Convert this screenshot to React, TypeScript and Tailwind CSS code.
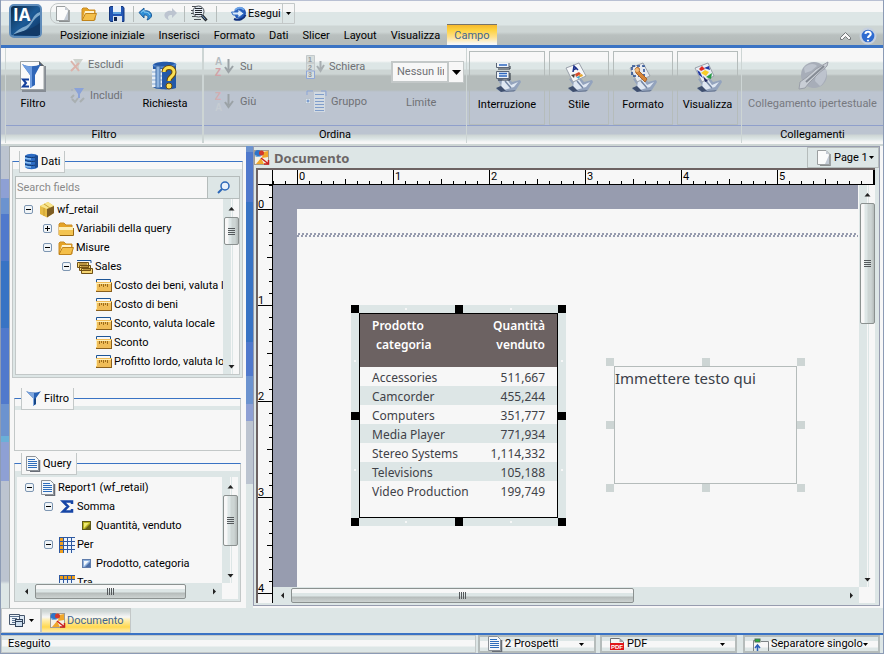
import type { ReactNode } from "react";
import clsx from "clsx";

/* ---------- Icons ---------- */

function LogoIcon() {
  return (
    <svg width="34" height="35" viewBox="0 0 34 35" aria-hidden="true">
      <defs>
        <linearGradient id="logo" x1="0" y1="0" x2="1" y2="1">
          <stop offset="0" stopColor="#0a2540" />
          <stop offset="0.5" stopColor="#1c5a96" />
          <stop offset="1" stopColor="#0b2f5c" />
        </linearGradient>
      </defs>
      <rect x="1" y="1" width="31" height="32" rx="4" fill="url(#logo)" stroke="#5f8cba" strokeWidth="2" />
      <path d="M31 8C22 11 25 18 17 22C12 24 8 26 3 32L15 27C22 24 23 15 31 11Z" fill="#a9cfe8" opacity="0.7" />
      <path d="M3 31C12 27 20 27 31 19V31Z" fill="#123a68" />
      <text x="4" y="17" fontFamily="Open Sans" fontWeight="700" fontSize="17" fill="#fff">IA</text>
    </svg>
  );
}

function NewIcon() {
  return (
    <svg width="16" height="16" viewBox="0 0 16 16" aria-hidden="true">
      <path d="M14 4V15.500H4" fill="none" stroke="#8b8f90" strokeWidth="1.500" />
      <path d="M1.500 0.500H10L13.500 4V14.500H1.500Z" fill="#fbfbfb" stroke="#9b9fa0" />
      <path d="M10 0.500V4H13.500L9 14H13V5Z" fill="#c3cad4" />
    </svg>
  );
}

function FolderIcon({ open = false }: { open?: boolean }) {
  return (
    <svg width="16" height="16" viewBox="0 0 16 16" aria-hidden="true">
      <path d="M1 14V3L2 2H6L8 4H14V14Z" fill="#e5a326" stroke="#c98d28" />
      {open ? (
        <>
          <path d="M2 12L4 5H13V8Z" fill="#fff3cf" />
          <path d="M1 14.500L4.500 7.500H15.500L13 14.500Z" fill="#f4bf49" stroke="#c0841c" />
        </>
      ) : (
        <>
          <path d="M1 6H15V14H1Z" fill="#f3c452" />
          <path d="M1 6H15V9H1Z" fill="#fdeeb4" />
          <path d="M2 14.500H15.500V7" fill="none" stroke="#9b6a13" />
        </>
      )}
    </svg>
  );
}

function SaveIcon() {
  return (
    <svg width="16" height="16" viewBox="0 0 16 16" aria-hidden="true">
      <path d="M0.500 1L2 0.500H14L15 2V15.500H1.500L0.500 14Z" fill="#2357b5" stroke="#14367c" />
      <rect x="4" y="0" width="8" height="8" fill="#eaf2fa" />
      <rect x="4" y="6" width="8" height="2" fill="#5ea2de" />
      <rect x="4" y="10" width="9" height="6" fill="#dce5ee" />
      <rect x="5" y="11" width="3" height="4" fill="#11254e" />
    </svg>
  );
}

function UndoIcon() {
  return (
    <svg width="15" height="14" viewBox="0 0 15 14" aria-hidden="true">
      <path d="M1 5.500L6 1V4C11 3 14 6 13.500 9C13 11 11 12.500 9 13C11 10 10 8 6 8V11Z" fill="#2f8fd6" stroke="#1d5c9b" />
      <path d="M3 5.500L6 3V5C9 5 11 5.500 12 8" fill="none" stroke="#8fd0f5" />
    </svg>
  );
}

function RedoIcon() {
  return (
    <svg width="15" height="14" viewBox="0 0 15 14" aria-hidden="true">
      <path d="M14 6L9 1V4C4 3 1 6 1.500 9C2 11 4 12.500 6 13C4 10 5 8 9 8V11Z" fill="#bcc4d0" />
    </svg>
  );
}

function PreviewIcon() {
  return (
    <svg width="17" height="17" viewBox="0 0 17 17" aria-hidden="true">
      <path d="M1 1.500H10M0 5.500H8M0 8.500H8M1 11.500H8M3 14.500H10" stroke="#4a4e54" />
      <circle cx="7.500" cy="6.500" r="5.500" fill="#e4ebf3" stroke="#4b5158" />
      <path d="M4 3.500H11M4 5.500H11M4 7.500H11M4 9.500H11" stroke="#22262c" />
      <path d="M11 10.500L15.500 15.500" stroke="#23262a" strokeWidth="3" />
      <path d="M11 10.500L14.500 14.500" stroke="#6fa0d8" />
    </svg>
  );
}

function RunIcon() {
  return (
    <svg width="16" height="15" viewBox="0 0 16 15" aria-hidden="true">
      <circle cx="9" cy="7" r="6" fill="#2457b8" />
      <path d="M4 4C7 1 11 1 13 4" fill="none" stroke="#6ea5e8" strokeWidth="2" />
      <path d="M0.500 6H7V3L13 7.500L7 12V9H2Z" fill="#dceafa" stroke="#3670c4" />
      <path d="M3 13C8 15 13 13 14.500 9" fill="none" stroke="#0f2f7c" strokeWidth="2" />
    </svg>
  );
}

function HelpIcon() {
  return (
    <svg width="18" height="18" viewBox="0 0 16 17" aria-hidden="true">
      <circle cx="8" cy="8.500" r="7" fill="#2f6bd0" stroke="#c6d0de" strokeWidth="2" />
      <path d="M5.500 6.500C6 3.500 11 4 10.500 7C10 8.500 8 8.500 8 10.500M8 12V13.500" fill="none" stroke="#fff" strokeWidth="2" />
    </svg>
  );
}

function FilterLargeIcon() {
  return (
    <svg width="28" height="32" viewBox="0 0 28 32" aria-hidden="true">
      <path d="M26 6V31H3" fill="none" stroke="#868c94" strokeWidth="2" />
      <path d="M1.500 1.500H20L25 6V29.500H1.500Z" fill="#fafafa" stroke="#9da3a4" />
      <path d="M20 1V6H25Z" fill="#596069" />
      <path d="M3 4C8 7 16 7 22 4L16 15V25L11 28V15Z" fill="#2f66b8" />
      <path d="M3 4C8 7 12 6 13 6V27L11 28V15Z" fill="#6e9de0" />
      <path d="M10 19.500H4L7 23L4 26.500H10" fill="none" stroke="#123f9c" strokeWidth="2" />
    </svg>
  );
}

function FunnelIcon() {
  return (
    <svg width="16" height="17" viewBox="0 0 16 17" aria-hidden="true">
      <path d="M0 1C5 3 11 3 15 1L10 8V14L7 16V8Z" fill="#2861b4" />
      <path d="M1 1.500C4 3 7 3 8 3V15.500L7 16V8Z" fill="#7fa7df" />
      <path d="M10 8V14L8 15V9Z" fill="#174584" />
    </svg>
  );
}

function ExcludeIcon() {
  return (
    <svg width="14" height="14" viewBox="0 0 14 14" aria-hidden="true">
      <path d="M3 1H13L9 7V12H7V7Z" fill="#cfd3ce" />
      <path d="M1 3L9 13M9 5L1 13" stroke="#dbb3ab" strokeWidth="2" />
    </svg>
  );
}

function IncludeIcon() {
  return (
    <svg width="16" height="17" viewBox="0 0 16 17" aria-hidden="true">
      <path d="M4 1H14L10 7V11H8V7Z" fill="#8aa2d8" />
      <path d="M1 11L4 8M2 12L5 15L8 11M10 15L14 11" stroke="#a9afb1" strokeWidth="2" fill="none" />
      <circle cx="2" cy="3" r="1" fill="#a8afc0" />
    </svg>
  );
}

function PromptIcon() {
  return (
    <svg width="28" height="30" viewBox="0 0 28 30" aria-hidden="true">
      <path d="M2 4C4 0 22 0 25 3V27C22 29 5 29 2 26Z" fill="#2459a8" />
      <path d="M2 4C7 7 20 7 25 3" fill="none" stroke="#4d84cf" strokeWidth="2" />
      <path d="M1 8H11V26H1Z" fill="#e6eef6" />
      <path d="M1 11H11M1 15H11M1 19H11M1 23H11" stroke="#86a9d2" />
      <rect x="5" y="5" width="4" height="22" fill="#8fb4de" stroke="#3e6da8" />
      <path d="M13 11C13 5 23 5 23 11C23 16 18 15 18 20" fill="none" stroke="#6f4d08" strokeWidth="5" />
      <path d="M13 11C13 5 23 5 23 11C23 16 18 15 18 20" fill="none" stroke="#fbe054" strokeWidth="3" />
      <circle cx="18" cy="25" r="3" fill="#fbe054" stroke="#6f4d08" />
    </svg>
  );
}

function SortIcon({ up = false }: { up?: boolean }) {
  return (
    <svg width="22" height="24" viewBox="0 0 22 24" aria-hidden="true">
      <g fontFamily="Liberation Sans" fontWeight="700" fontSize="10">
        <text x="1" y="10" fill={up ? "#b5bcc0" : "#d3adb0"}>{up ? "A" : "Z"}</text>
        <text x="1" y="21" fill={up ? "#d3a1a6" : "#c6ccd2"}>{up ? "Z" : "A"}</text>
      </g>
      <path d="M14.500 4V15M11 12L14.500 17L19 11" fill="none" stroke="#9ba2a6" strokeWidth="2" />
    </svg>
  );
}

function RankIcon() {
  return (
    <svg width="20" height="24" viewBox="0 0 20 24" aria-hidden="true">
      <path d="M1.500 0.500H9.500V8H1.500ZM1.500 8H9.500V16H1.500Z" fill="#d8dedd" stroke="#c3c9cb" />
      <path d="M1.500 16H9.500V23.500H1.500Z" fill="#d8dedd" stroke="#8ea6d8" />
      <g fontFamily="Liberation Sans" fontWeight="700" fontSize="7" fill="#92989d">
        <text x="3" y="7">1</text>
        <text x="3" y="15">2</text>
        <text x="3" y="22">3</text>
      </g>
      <path d="M15.500 6V14M12 11L15.500 16L19 10" fill="none" stroke="#a8aeb1" strokeWidth="2" />
    </svg>
  );
}

function GroupIcon() {
  return (
    <svg width="22" height="23" viewBox="0 0 22 23" aria-hidden="true">
      <path d="M2 5V1H8M16 1H21V6" fill="none" stroke="#8ba5d8" />
      <path d="M9 2H20V22H9Z" fill="#d2dae2" />
      <path d="M10 4.500H19M10 8.500H19M10 11.500H19M10 14.500H19M10 17.500H19M10 20.500H19" stroke="#7f9dca" />
      <rect x="0.500" y="8.500" width="5" height="5" fill="#dbe3ea" stroke="#b9c3cd" />
      <path d="M3 9.500V12.500M1.500 11H4.500" stroke="#5f86c4" />
    </svg>
  );
}

// Silver bracket shared by the large "Campo" buttons
function Stand() {
  return (
    <>
      <path d="M5 17L15 14L20 20L28 18L29 20L24 28L9 30L4 27L9 23Z" fill="#93a3bd" />
      <path d="M10 18L14 16L19 23L26 20L22 25L12 28L9 26Z" fill="#dfe7f2" />
      <path d="M13 19L19 26" stroke="#7385a3" strokeWidth="1.500" />
      <path d="M4 26L9 24L14 29L9 30Z" fill="#3f4f6e" />
      <path d="M14 29L24 28L22 29.500L12 30Z" fill="#5f708f" />
    </>
  );
}

function BreakIcon() {
  return (
    <svg width="30" height="31" viewBox="0 0 30 31" aria-hidden="true">
      <Stand />
      <path d="M4.500 1V5.500H17V1M4.500 9.500H17V16.500H4.500Z" fill="#eef3f9" stroke="#5b6575" />
      <path d="M7 3H15M7 11.500H15M7 14H15" stroke="#2e68c0" strokeWidth="1.500" />
      <path d="M6 7H18V4M6 18H18V11" fill="none" stroke="#252c38" />
    </svg>
  );
}

function StyleIcon() {
  return (
    <svg width="30" height="31" viewBox="0 0 30 31" aria-hidden="true">
      <Stand />
      <path d="M2 6L15 1L22 14L9 20Z" fill="#f5f7f9" stroke="#9aa1ab" />
      <path d="M9 10L10 4L14 8M9 8L13 6" fill="none" stroke="#1b2f88" strokeWidth="1.500" />
      <path d="M7 13L11 12L10 16Z" fill="#46403d" />
      <path d="M11 12L15 10L17 12L12 15Z" fill="#d74a2b" />
      <path d="M15 13L18 12L19 14L14 16Z" fill="#e4a72b" />
      <path d="M12 15L16 14L15 17Z" fill="#39a3d5" />
    </svg>
  );
}

function FormatIcon() {
  return (
    <svg width="30" height="31" viewBox="0 0 30 31" aria-hidden="true">
      <Stand />
      <path d="M2 6L15 1L22 14L9 20Z" fill="#e6eaf0" stroke="#9aa1ab" />
      <path d="M4 4H16V14H4Z" fill="none" stroke="#264c91" strokeWidth="1.500" strokeDasharray="3 2" />
      <path d="M7 7C9 4 13 6 11 9L19 17L17 20L8 11Z" fill="#d78638" stroke="#a8642a" />
      <circle cx="9" cy="8" r="2" fill="#f2bb79" />
    </svg>
  );
}

function ViewIcon() {
  return (
    <svg width="30" height="31" viewBox="0 0 30 31" aria-hidden="true">
      <Stand />
      <path d="M2 6L15 1L21 14L9 20Z" fill="#e9eef4" stroke="#9aa1ab" />
      <path d="M6 7L9 4L12 7L8 9Z" fill="#e02a24" />
      <path d="M4 8L7 10L10 16L6 13ZM11 6L16 4L17 8Z" fill="#2038a2" />
      <path d="M8 11L12 8L16 10L13 14Z" fill="#f7cd27" />
      <path d="M13 15L19 11L18 17Z" fill="#299b45" />
      <path d="M10 14L15 19L12 20Z" fill="#1e245f" />
    </svg>
  );
}

function LinkIcon() {
  return (
    <svg width="34" height="32" viewBox="0 0 34 32" aria-hidden="true">
      <circle cx="18" cy="15" r="13" fill="#a7adb8" />
      <path d="M8 8C12 3 19 3 21 6L15 11L9 13ZM20 14L30 9C32 15 28 24 24 26L19 21Z" fill="#bdc3cd" />
      <path d="M3 29L4 22L11 17L20 9L32 2L31 6L21 15L13 23L9 28Z" fill="#c9ced5" stroke="#9a9fa8" />
      <path d="M10 22L28 6" stroke="#858b94" strokeWidth="2" />
    </svg>
  );
}

function DatabaseIcon() {
  return (
    <svg width="15" height="17" viewBox="0 0 15 17" aria-hidden="true">
      <path d="M1 3C3 0 12 0 14 3V14C12 17 3 17 1 14Z" fill="#2c6cc4" />
      <path d="M1 3C4 5 11 5 14 3M1 7C4 9 11 9 14 7M1 11C4 13 11 13 14 11" fill="none" stroke="#12386f" />
      <path d="M1 5C3 6 5 6 7 6M1 9C3 10 5 10 7 10M1 13C3 14 5 14 7 14" fill="none" stroke="#8ec2f2" strokeWidth="1.500" />
      <path d="M11 2V15L14 14V3Z" fill="#1c4c93" />
    </svg>
  );
}

function SearchIcon() {
  return (
    <svg width="13" height="13" viewBox="0 0 13 13" aria-hidden="true">
      <circle cx="8" cy="5" r="4" fill="#e8f1fb" stroke="#2b67b8" strokeWidth="1.500" />
      <path d="M5 8L1 12" stroke="#2b67b8" strokeWidth="2" />
    </svg>
  );
}

function CubeIcon() {
  return (
    <svg width="16" height="16" viewBox="0 0 16 16" aria-hidden="true">
      <path d="M1 4L9 0L15 4V11L8 15.500L1 12Z" fill="#e6bb45" />
      <path d="M1 4L9 0L15 4L8 7Z" fill="#f8e58c" />
      <path d="M8 7L15 4V11L8 15.500Z" fill="#7d5d23" />
      <path d="M5 2L11 6M5 6V14" stroke="#caa033" />
    </svg>
  );
}

function RulerIcon() {
  return (
    <svg width="16" height="13" viewBox="0 0 16 13" aria-hidden="true">
      <path d="M0.500 3V0.500H14.500V3" fill="none" stroke="#1d5596" />
      <rect x="0" y="3" width="16" height="9" fill="#f0bd58" />
      <path d="M0 4.500H15M0.500 4V11" stroke="#fdeeb9" />
      <path d="M3.500 5V8M5.500 5V7M7.500 5V8M9.500 5V7M11.500 5V8" stroke="#9c6c1c" />
      <path d="M0 12.500H16M15.500 4V12" stroke="#8b601c" />
    </svg>
  );
}

function MeasuresIcon() {
  return (
    <svg width="16" height="14" viewBox="0 0 16 14" aria-hidden="true">
      <path d="M0 0.500H14V3" fill="none" stroke="#1d5596" />
      <path d="M0.500 2.500H11.500V7.500H0.500ZM2.500 5.500H13.500V10.500H2.500ZM4.500 8.500H15.500V13.500H4.500Z" fill="#f5d572" stroke="#6f5014" />
      <path d="M3 3V5M5 3V5M7 3V5M9 3V5M5 6V8M7 6V8M9 6V8M11 6V8M7 9V11M9 9V11M11 9V11M13 9V11" stroke="#835812" />
    </svg>
  );
}

function ReportIcon() {
  return (
    <svg width="15" height="16" viewBox="0 0 15 16" aria-hidden="true">
      <path d="M13.500 4V15.500H4" fill="none" stroke="#686d76" strokeWidth="1.500" />
      <path d="M0.500 0.500H9.500L12.500 3.500V14.500H0.500Z" fill="#f4f8fb" stroke="#8c9197" />
      <path d="M2 3.500H9M2 5.500H11M2 7.500H11M2 9.500H11M2 11.500H11" stroke="#2e6dbb" />
    </svg>
  );
}

function SigmaIcon() {
  return (
    <svg width="14" height="13" viewBox="0 0 14 13" aria-hidden="true">
      <path d="M12 4V1.500H3L8 6.500L3 11.500H12V9" fill="none" stroke="#1746a6" strokeWidth="2.500" />
    </svg>
  );
}

function GridIcon({ across = false }: { across?: boolean }) {
  return (
    <svg width="16" height="16" viewBox="0 0 16 16" aria-hidden="true">
      <rect width="16" height="16" fill="#2e58a0" />
      {[1, 5, 9, 13].map((y) =>
        [1, 5, 9, 13].map((x) => (
          <rect
            key={`${x}-${y}`}
            x={x}
            y={y}
            width="3"
            height="3"
            fill={(across ? y : x) === 1 ? "#f0a01e" : "#eef4fb"}
          />
        ))
      )}
    </svg>
  );
}

function FieldIcon({ blue = false }: { blue?: boolean }) {
  return (
    <svg width="9" height="9" viewBox="0 0 9 9" aria-hidden="true">
      <rect x="0.500" y="0.500" width="8" height="8" fill={blue ? "#8fb2de" : "#b8b320"} stroke={blue ? "#5f7cab" : "#5d5a1a"} />
      <path d="M2 2H7L2 7Z" fill={blue ? "#f1f7fd" : "#efea74"} />
      <path d="M8 3V8H3Z" fill={blue ? "#4a6ca5" : "#68641a"} />
    </svg>
  );
}

function DocumentIcon() {
  return (
    <svg width="16" height="15" viewBox="0 0 16 15" aria-hidden="true">
      <rect x="0.500" y="0.500" width="14" height="14" fill="#f5f1e6" stroke="#a39c90" />
      <path d="M9 2L14 1V7L8 8ZM2 14L7 8L10 14Z" fill="#f0a72b" />
      <circle cx="4" cy="3.500" r="3.500" fill="#2f74c8" />
      <path d="M1 5C3 7 6 7 8 5" stroke="#8fc3ea" fill="none" />
      <circle cx="7.500" cy="3" r="2.500" fill="#d3382b" />
      <path d="M7 8L14 13.500M14.500 10V14H10" fill="none" stroke="#cb1f1d" strokeWidth="1.500" />
    </svg>
  );
}

function WindowsIcon() {
  return (
    <svg width="16" height="15" viewBox="0 0 16 15" aria-hidden="true">
      <path d="M6 2.500H15.500V10.500H13" fill="#dce8f4" stroke="#46566c" />
      <path d="M0.500 1.500H10.500V11.500H0.500Z" fill="#eef4fa" stroke="#46566c" />
      <path d="M1 3.500H10M3 5.500H8M3 7.500H8M3 9.500H6" stroke="#58708f" />
      <rect x="6.500" y="6.500" width="7" height="7" fill="#cfe0f0" stroke="#31425a" />
      <path d="M7 8.500H13" stroke="#31425a" />
    </svg>
  );
}

function PdfIcon() {
  return (
    <svg width="15" height="13" viewBox="0 0 15 13" aria-hidden="true">
      <path d="M0.500 12V0.500H9.500L13.500 4V12" fill="#f5f6f6" stroke="#6c7074" />
      <path d="M9.500 0.500V4H13.500Z" fill="#9ca1a6" />
      <rect x="0" y="5" width="14" height="7" fill="#e0161b" />
      <text x="1" y="11" fontFamily="Liberation Sans" fontWeight="700" fontSize="6" fill="#fff">PDF</text>
    </svg>
  );
}

function OutputIcon() {
  return (
    <svg width="16" height="13" viewBox="0 0 16 13" aria-hidden="true">
      <path d="M0.500 13V2.500H6M8 3.500H15.500V13" fill="none" stroke="#7e8486" />
      <rect x="2" y="1" width="5" height="3" fill="#27b43b" stroke="#4f6b54" />
      <path d="M4.500 13V7M2 10L4.500 7L7 10" fill="none" stroke="#2b5fb8" strokeWidth="1.500" />
    </svg>
  );
}

function Caret({ wide = false }: { wide?: boolean }) {
  return (
    <svg width={wide ? 9 : 5} height={wide ? 5 : 3} viewBox="0 0 6 3" preserveAspectRatio="none" aria-hidden="true">
      <path d="M0 0H6L3 3Z" fill="#000" />
    </svg>
  );
}

/* ---------- Shared pieces ---------- */

function ScrollArrow({ dir }: { dir: "up" | "down" | "left" | "right" }) {
  return (
    <svg width="7" height="7" viewBox="0 0 7 7" className="shrink-0" aria-hidden="true">
      {dir === "up" && <path d="M0.500 5.500L3.500 2L6.500 5.500Z" fill="#222" />}
      {dir === "down" && <path d="M0.500 2L3.500 5.500L6.500 2Z" fill="#222" />}
      {dir === "left" && <path d="M5 0.500L2 3.500L5 6.500Z" fill="#222" />}
      {dir === "right" && <path d="M2 0.500L5 3.500L2 6.500Z" fill="#222" />}
    </svg>
  );
}

function VScroll({ thumb }: { thumb: string }) {
  return (
    <div className="flex w-4 shrink-0 flex-col items-center bg-[linear-gradient(90deg,#dde6e6_8px,#f7f7f7_8px,#f7f7f7_9px,#dde6e6_9px,#dde6e6_10px,#f7f7f7_10px)]">
      <div className="flex h-[18px] shrink-0 items-center">
        <ScrollArrow dir="up" />
      </div>
      <div
        className={clsx(
          "flex w-[15px] shrink-0 flex-col items-center justify-center gap-px rounded-xs border border-[#8b9190] bg-[linear-gradient(90deg,#f7f7f7_3px,#dde6e6_4px,#dde6e6_6px,#cdd5d4_7px,#cdd5d4_10px,#b5bbba)]",
          thumb
        )}
      >
        {[0, 1, 2, 3].map((i) => (
          <span key={i} className="h-px w-[7px] bg-[#55595c]" />
        ))}
      </div>
      <div className="mt-auto flex h-4 items-center">
        <ScrollArrow dir="down" />
      </div>
    </div>
  );
}

function HScroll({ thumb }: { thumb: string }) {
  return (
    <div className="flex h-4 min-w-0 flex-1 items-center bg-[#dde6e6]">
      <div className="flex w-[18px] shrink-0 justify-center">
        <ScrollArrow dir="left" />
      </div>
      <div
        className={clsx(
          "flex h-[15px] items-center justify-center gap-px rounded-xs border border-[#8b9190] bg-[linear-gradient(#f7f7f7_4px,#dde6e6_4px,#dde6e6_7px,#b5bbba_8px,#cdd3d2)]",
          thumb
        )}
      >
        {[0, 1, 2, 3].map((i) => (
          <span key={i} className="h-[7px] w-px bg-[#55595c]" />
        ))}
      </div>
      <div className="ml-auto flex w-4 justify-center">
        <ScrollArrow dir="right" />
      </div>
    </div>
  );
}

type TreeItem = {
  level: number;
  label: string;
  icon: ReactNode;
  state?: "open" | "closed";
};

const indents = ["pl-2", "pl-[27px]", "pl-[46px]", "pl-[65px]"];

function Tree({ items }: { items: TreeItem[] }) {
  return (
    <ul className="min-w-0 flex-1 overflow-hidden pt-px">
      {items.map((item) => (
        <li key={item.label} className={clsx("flex h-[19px] items-center whitespace-nowrap", indents[item.level])}>
          {item.state ? (
            <button
              aria-label={item.label}
              className="mr-1.5 flex size-[9px] shrink-0 items-center justify-center rounded-xs border border-[#7d96b2] bg-[#f0f4f7]"
            >
              <svg width="5" height="5" viewBox="0 0 5 5" aria-hidden="true">
                <path d={item.state === "open" ? "M0 2.500H5" : "M0 2.500H5M2.500 0V5"} stroke="#000" />
              </svg>
            </button>
          ) : (
            <span className="mr-1.5 w-[9px] shrink-0" />
          )}
          <span className="flex w-4 shrink-0 justify-center">{item.icon}</span>
          <span className="ml-0.5">{item.label}</span>
        </li>
      ))}
    </ul>
  );
}

function Panel({
  icon,
  title,
  className,
  children,
}: {
  icon: ReactNode;
  title: string;
  className?: string;
  children?: ReactNode;
}) {
  return (
    <section className={clsx("flex flex-col", className)}>
      <h2 className="relative z-10 -mb-3 ml-[7px] flex h-[22px] items-center gap-0.5 self-start border border-t-0 border-[#c3c8c8] bg-[#f7f7f7] px-1">
        {icon}
        {title}
      </h2>
      <div className="flex min-h-0 flex-1 flex-col border border-[#c3c8c8] border-t-[#3a73c4] bg-[#dde6e6]">
        <div className="h-[7px] shrink-0 bg-[#f7f7f7]" />
        {children}
      </div>
    </section>
  );
}

/* ---------- Ribbon ---------- */

function LargeButton({
  icon,
  label,
  boxed,
  disabled,
  className,
}: {
  icon: ReactNode;
  label: string;
  boxed?: boolean;
  disabled?: boolean;
  className?: string;
}) {
  return (
    <button
      disabled={disabled}
      className={clsx(
        "flex flex-col items-center whitespace-nowrap pt-[9px]",
        boxed && "border border-[#b5bcbb]",
        disabled && "text-[#77797f]",
        className
      )}
    >
      <span className="flex h-8 items-center">{icon}</span>
      <span className="mt-1">{label}</span>
    </button>
  );
}

function SmallButton({ icon, label }: { icon: ReactNode; label: string }) {
  return (
    <button disabled className="flex h-[35px] items-center gap-1 whitespace-nowrap text-[#6f7175]">
      {icon}
      {label}
    </button>
  );
}

function RibbonGroup({
  title,
  className,
  children,
}: {
  title?: string;
  className?: string;
  children: ReactNode;
}) {
  return (
    <section className={clsx("flex shrink-0 flex-col border-l border-[#cdd5d4] pt-[3px]", className)}>
      <div className="flex h-[74px]">{children}</div>
      <h2 className="flex h-[18px] items-center justify-center border-t border-[#8f9fcb]">{title}</h2>
    </section>
  );
}

function Ribbon() {
  return (
    <div className="border-b-2 border-[#cdd5d4] bg-[linear-gradient(#f7f7f7_13px,#dde6e6_15px,#dde6e6_21px,#cdd5d4_22px,#cdd5d4_26px,#b5bcbb_28px,#b5bcbb_42px,#bcc4d0_44px,#bcc4d0_86px,#cdd5d4_87px,#dde6e6_91px,#f7f7f7_94px)]">
      <div className="flex pb-px pl-1">
        <RibbonGroup title="Filtro" className="w-[197px]">
          <LargeButton icon={<FilterLargeIcon />} label="Filtro" className="w-[54px]" />
          <div className="ml-2.5 w-[60px]">
            <div className="-mt-1 -mb-1">
              <SmallButton icon={<ExcludeIcon />} label="Escludi" />
            </div>
            <SmallButton icon={<IncludeIcon />} label="Includi" />
          </div>
          <LargeButton icon={<PromptIcon />} label="Richiesta" className="ml-1 w-[62px]" />
        </RibbonGroup>

        <RibbonGroup title="Ordina" className="w-[264px] border-l-2">
          <div className="-mt-0.5 ml-2.5 w-[91px]">
            <SmallButton icon={<SortIcon up />} label="Su" />
            <SmallButton icon={<SortIcon />} label="Giù" />
          </div>
          <div className="-mt-0.5 w-[86px]">
            <SmallButton icon={<RankIcon />} label="Schiera" />
            <SmallButton icon={<GroupIcon />} label="Gruppo" />
          </div>
          <div className="flex flex-col pt-2.5">
            <div className="relative">
              <select
                id="limit"
                className="h-[22px] w-[73px] appearance-none border-2 border-[#c3c8c8] bg-[#f7f7f7] pr-[18px] pl-1 text-[#6f7175]"
              >
                <option>Nessun limite</option>
              </select>
              <span className="pointer-events-none absolute top-px right-px bottom-px flex w-4 items-center justify-center border-l-2 border-[#c3c8c8] bg-[#f7f7f7]">
                <Caret wide />
              </span>
            </div>
            <label htmlFor="limit" className="mt-3 ml-[15px] text-[#6f7175]">
              Limite
            </label>
          </div>
        </RibbonGroup>

        <RibbonGroup className="w-[275px] [&>div]:gap-1 [&>div]:px-0.5">
          <LargeButton boxed icon={<BreakIcon />} label="Interruzione" className="w-[76px]" />
          <LargeButton boxed icon={<StyleIcon />} label="Stile" className="w-[60px]" />
          <LargeButton boxed icon={<FormatIcon />} label="Formato" className="w-[60px]" />
          <LargeButton boxed icon={<ViewIcon />} label="Visualizza" className="w-[61px]" />
        </RibbonGroup>

        <RibbonGroup title="Collegamenti" className="min-w-[140px] flex-1">
          <LargeButton disabled icon={<LinkIcon />} label="Collegamento ipertestuale" className="w-full" />
        </RibbonGroup>
      </div>
    </div>
  );
}

/* ---------- Header ---------- */

const tabs = ["Posizione iniziale", "Inserisci", "Formato", "Dati", "Slicer", "Layout", "Visualizza"];

function Header() {
  return (
    <header className="flex h-12 shrink-0 border-t border-b-3 border-t-[#b9c0d3] border-b-[#3a73c4] bg-[linear-gradient(#f7f7f7_11px,#dde6e6_11px,#dde6e6_24px,#cdd5d4_25px,#cdd5d4_31px,#b9c0bf_34px,#b5bcbb_40px)] pl-2">
      <button aria-label="InfoAssist" className="mt-[3px] self-start">
        <LogoIcon />
      </button>
      <div className="ml-[7px] flex min-w-0 flex-1 flex-col">
        <div className="mt-0.5 flex h-[21px] items-center self-start rounded-l-lg border border-[#c3c8c8] pl-1">
          <button aria-label="Nuovo" className="mr-2.5"><NewIcon /></button>
          <button aria-label="Apri" className="mr-3"><FolderIcon open /></button>
          <button aria-label="Salva" className="mr-2"><SaveIcon /></button>
          <span className="h-4 w-px bg-[#b5bcbb]" />
          <button aria-label="Annulla" className="mr-2.5 ml-1"><UndoIcon /></button>
          <button aria-label="Ripeti" disabled className="mr-1.5"><RedoIcon /></button>
          <span className="h-4 w-px bg-[#b5bcbb]" />
          <button aria-label="Anteprima" className="mr-2 ml-1.5"><PreviewIcon /></button>
          <span className="h-4 w-px bg-[#b5bcbb]" />
          <button className="ml-3.5 flex items-center gap-px">
            <RunIcon />
            Esegui
          </button>
          <button aria-label="Opzioni di esecuzione" className="ml-px flex h-full w-3 items-center justify-center border-l border-[#c3c8c8]">
            <Caret />
          </button>
        </div>
        <nav className="flex h-[21px] items-end pl-[3px]">
          {tabs.map((tab) => (
            <a key={tab} href="#" className="px-[7px] pb-px leading-4 whitespace-nowrap">
              {tab}
            </a>
          ))}
          <a
            href="#"
            className="h-[21px] border-t border-[#77746b] bg-[linear-gradient(#f6b82c,#fdd23f_5px,#ffe08a_12px,#f7f7f7_19px)] px-[7px] leading-[21px] text-[#3f6592]"
          >
            Campo
          </a>
          <div className="mr-1.5 ml-auto flex items-center gap-2">
            <button aria-label="Riduci barra multifunzione">
              <svg width="11" height="8" viewBox="0 0 11 8" aria-hidden="true">
                <path d="M0.500 5.500L5.500 0.500L10.500 5.500V7.500H8.500L5.500 4.500L2.500 7.500H0.500Z" fill="#f7f7f7" stroke="#73777a" />
              </svg>
            </button>
            <button aria-label="Guida"><HelpIcon /></button>
          </div>
        </nav>
      </div>
    </header>
  );
}

/* ---------- Left side ---------- */

const dataTree: TreeItem[] = [
  { level: 0, label: "wf_retail", icon: <CubeIcon />, state: "open" },
  { level: 1, label: "Variabili della query", icon: <FolderIcon />, state: "closed" },
  { level: 1, label: "Misure", icon: <FolderIcon open />, state: "open" },
  { level: 2, label: "Sales", icon: <MeasuresIcon />, state: "open" },
  { level: 3, label: "Costo dei beni, valuta locale", icon: <RulerIcon /> },
  { level: 3, label: "Costo di beni", icon: <RulerIcon /> },
  { level: 3, label: "Sconto, valuta locale", icon: <RulerIcon /> },
  { level: 3, label: "Sconto", icon: <RulerIcon /> },
  { level: 3, label: "Profitto lordo, valuta locale", icon: <RulerIcon /> },
  { level: 3, label: "Profitto lordo", icon: <RulerIcon /> },
];

const queryTree: TreeItem[] = [
  { level: 0, label: "Report1 (wf_retail)", icon: <ReportIcon />, state: "open" },
  { level: 1, label: "Somma", icon: <SigmaIcon />, state: "open" },
  { level: 2, label: "Quantità, venduto", icon: <FieldIcon /> },
  { level: 1, label: "Per", icon: <GridIcon />, state: "open" },
  { level: 2, label: "Prodotto, categoria", icon: <FieldIcon blue /> },
  { level: 1, label: "Tra", icon: <GridIcon across /> },
];

function Sidebar() {
  return (
    <aside className="flex w-[237px] shrink-0 flex-col border-t border-l border-[#a6acae] bg-[#f7f7f7] pr-[3px] pb-1.5 pl-0.5">
      <Panel icon={<DatabaseIcon />} title="Dati" className="min-h-0 flex-1 pt-1">
        <div className="mt-[7px] flex min-h-0 flex-1 flex-col px-0.5 pb-0.5">
          <div className="flex h-[23px] shrink-0 border border-[#b5bcbb]">
            <input
              type="search"
              aria-label="Search fields"
              placeholder="Search fields"
              className="min-w-0 flex-1 bg-[#f7f7f7] px-px outline-none placeholder:text-[#8a8a8a]"
            />
            <button aria-label="Cerca" className="flex w-8 items-center justify-center border-l border-[#b5bcbb]">
              <SearchIcon />
            </button>
          </div>
          <div className="flex min-h-0 flex-1 border border-t-0 border-[#c3c8c8] bg-[#f7f7f7]">
            <Tree items={dataTree} />
            <VScroll thumb="h-7" />
          </div>
        </div>
      </Panel>

      <Panel icon={<FunnelIcon />} title="Filtro" className="mx-0.5 mt-2.5 h-[63px] shrink-0">
        <div className="mt-1 flex-1 bg-[#f7f7f7]" />
      </Panel>

      <Panel icon={<ReportIcon />} title="Query" className="mx-0.5 mt-0.5 h-[149px] shrink-0">
        <div className="mx-0.5 mt-1.5 flex min-h-0 flex-1 bg-[#f7f7f7]">
          <Tree items={queryTree} />
          <VScroll thumb="h-[51px]" />
        </div>
        <div className="mx-0.5 mb-0.5 flex">
          <HScroll thumb="w-[151px]" />
          <span className="w-4 bg-[#f7f7f7]" />
        </div>
      </Panel>
    </aside>
  );
}

/* ---------- Design canvas ---------- */

// One mark per inch, enough for a letter page
const marks = [0, 1, 2, 3, 4, 5, 6, 7, 8];

function HorizontalRuler() {
  return (
    <svg height="15" className="w-full shrink-0 border-r border-b border-black" aria-hidden="true">
      <path d="M14.500 0V15" stroke="#000" />
      {marks.map((n) => (
        <g key={n} transform={`translate(${39 + n * 96} 0)`} stroke="#000">
          <path d="M0.500 0V15M12.500 11V15M24.500 11V15M36.500 11V15M48.500 9V15M60.500 11V15M72.500 11V15M84.500 11V15" />
          <text x="2" y="10" fontSize="11" stroke="none">{n}</text>
        </g>
      ))}
      <path d="M15.500 11V15M27.500 11V15" stroke="#000" />
    </svg>
  );
}

function VerticalRuler() {
  return (
    <svg width="15" className="h-full shrink-0 border-r border-black" aria-hidden="true">
      {marks.map((n) => (
        <g key={n} transform={`translate(0 ${24 + n * 96})`} stroke="#000">
          <path d="M0 0.500H15M11 12.500H15M11 24.500H15M11 36.500H15M9 48.500H15M11 60.500H15M11 72.500H15M11 84.500H15" />
          <text x="0" y="-1" fontSize="11" stroke="none">{n}</text>
        </g>
      ))}
      <path d="M11 0.500H15M11 12.500H15" stroke="#000" />
    </svg>
  );
}

const handlePositions = [
  "top-0 left-0",
  "top-0 left-1/2 -translate-x-1/2",
  "top-0 right-0",
  "top-1/2 left-0 -translate-y-1/2",
  "top-1/2 right-0 -translate-y-1/2",
  "bottom-0 left-0",
  "bottom-0 left-1/2 -translate-x-1/2",
  "bottom-0 right-0",
];

const dotPositions = [
  "top-[3px] left-1/4",
  "top-[3px] right-1/4",
  "bottom-[3px] left-1/4",
  "bottom-[3px] right-1/4",
  "top-1/4 left-[3px]",
  "bottom-1/4 left-[3px]",
  "top-1/4 right-[3px]",
  "bottom-1/4 right-[3px]",
];

function Handles({ color }: { color: string }) {
  return (
    <>
      {handlePositions.map((position) => (
        <span key={position} className={clsx("absolute size-2", position, color)} />
      ))}
    </>
  );
}

const rows = [
  ["Accessories", "511,667"],
  ["Camcorder", "455,244"],
  ["Computers", "351,777"],
  ["Media Player", "771,934"],
  ["Stereo Systems", "1,114,332"],
  ["Televisions", "105,188"],
  ["Video Production", "199,749"],
];

function ReportObject() {
  return (
    <div className="absolute top-[120px] left-[78px] bg-[#dde6e6] p-2 font-['Noto_Sans',sans-serif] text-xs text-[#3f4248]">
      <div className="h-[205px] w-[199px] border border-black bg-[#f7f7f7]">
        <table className="w-full">
          <thead className="bg-[#6c6262] text-white">
            <tr className="h-[53px] align-top leading-[19px]">
              <th className="pt-0.5 pl-3 text-left font-semibold">
                Prodotto
                <br />
                <span className="pl-1">categoria</span>
              </th>
              <th className="pt-0.5 pr-3 text-right font-semibold">
                Quantità
                <br />
                venduto
              </th>
            </tr>
          </thead>
          <tbody className="leading-[17px]">
            {rows.map(([name, value]) => (
              <tr key={name} className="even:bg-[#dde6e6]">
                <td className="pt-0.5 pl-3">{name}</td>
                <td className="pt-0.5 pr-3 text-right">{value}</td>
              </tr>
            ))}
          </tbody>
        </table>
      </div>
      {dotPositions.map((position) => (
        <span key={position} className={clsx("absolute size-0.5 bg-[#f7f7f7]", position)} />
      ))}
      <Handles color="bg-black" />
    </div>
  );
}

function TextObject() {
  return (
    <div className="absolute top-[173px] left-[333px] p-2">
      <textarea
        aria-label="Testo"
        defaultValue="Immettere testo qui"
        className="block h-[118px] w-[183px] resize-none border border-[#b5bcbb] bg-transparent font-['Noto_Sans',sans-serif] text-[15px] leading-[22px] text-[#3b4048] outline-none"
      />
      <Handles color="bg-[#cdd5d4]" />
    </div>
  );
}

function DocumentView() {
  return (
    <main className="mr-[3px] mb-0.5 flex min-w-0 flex-1 flex-col border border-[#979caf] bg-[#dde6e6]">
      <div className="flex h-[21px] shrink-0 items-center">
        <h1 className="flex items-center gap-1 font-['Noto_Sans',sans-serif] text-[13px] font-bold text-[#6c6666]">
          <DocumentIcon />
          Documento
        </h1>
        <div className="relative ml-auto flex h-full items-center border border-[#b5bcbb] pl-2">
          <NewIcon />
          <select aria-label="Pagina" className="w-[46px] appearance-none pl-0.5">
            <option>Page 1</option>
          </select>
          <span className="pointer-events-none absolute right-1 bottom-2">
            <Caret />
          </span>
        </div>
      </div>
      <div className="mr-1 mb-0.5 ml-0.5 flex min-h-0 flex-1 flex-col border-t-2 border-l-2 border-[#6c6262] bg-[#f7f7f7]">
        <HorizontalRuler />
        <div className="flex min-h-0 flex-1">
          <VerticalRuler />
          <div className="flex min-w-0 flex-1 flex-col">
            <div className="flex min-h-0 flex-1">
              <div className="relative mr-px min-w-0 flex-1 overflow-hidden bg-[#979caf] pt-6 pl-6">
                <div className="h-full bg-[#f7f7f7] pt-6">
                  <div className="h-0.5 bg-[repeating-linear-gradient(90deg,#f7f7f7_0_1px,#979caf_1px_3px,#f7f7f7_3px_4px)]" />
                  <div className="h-0.5 bg-[repeating-linear-gradient(90deg,#979caf_0_2px,#f7f7f7_2px_4px)]" />
                </div>
                <ReportObject />
                <TextObject />
              </div>
              <VScroll thumb="h-[121px]" />
            </div>
            <div className="flex">
              <HScroll thumb="w-[343px]" />
              <span className="w-4 bg-[#f7f7f7]" />
            </div>
          </div>
        </div>
      </div>
    </main>
  );
}

/* ---------- Bottom bars ---------- */

function StatusSelect({
  icon,
  label,
  value,
  className,
}: {
  icon: ReactNode;
  label: string;
  value: string;
  className: string;
}) {
  return (
    <div className={clsx("relative flex shrink-0 items-center gap-0.5 border-2 border-[#b5bcbb] bg-[linear-gradient(#dde6e6_4px,#f7f7f7_4px,#f7f7f7_10px,#dde6e6_11px)]", className)}>
      {icon}
      <select aria-label={label} className="min-w-0 flex-1 appearance-none">
        <option>{value}</option>
      </select>
      <span className="pointer-events-none absolute right-2.5">
        <Caret />
      </span>
    </div>
  );
}

function BottomBars() {
  return (
    <footer className="shrink-0 bg-[#dde6e6]">
      <div className="flex h-[25px]">
        <button aria-label="Finestre" className="flex w-10 items-center justify-center gap-1 border border-[#c3c8c8] bg-[#f7f7f7]">
          <WindowsIcon />
          <Caret />
        </button>
        <button className="flex items-center gap-px border border-[#c3c8c8] bg-[linear-gradient(#cdd5d4_2px,#f7f7f7_8px,#ffeeb0_11px,#ffd84f_18px,#ffe9a0_22px)] pr-1.5 pl-2 text-[#3f6592]">
          <DocumentIcon />
          Documento
        </button>
      </div>
      <div className="flex h-[21px] border-t-2 border-b border-t-[#3a73c4] border-b-[#8c9bb5]">
        <p className="flex min-w-0 flex-1 items-center border border-[#c3c8c8] bg-[linear-gradient(#dde6e6_4px,#f7f7f7_4px,#f7f7f7_10px,#dde6e6_11px)] pl-1.5">
          Eseguito
        </p>
        <StatusSelect icon={<ReportIcon />} label="Prospetti" value="2 Prospetti" className="ml-0.5 w-[118px] pl-2" />
        <StatusSelect icon={<PdfIcon />} label="Formato di output" value="PDF" className="ml-1 w-[137px] pl-2" />
        <StatusSelect icon={<OutputIcon />} label="Destinazione" value="Separatore singolo" className="mr-[3px] ml-1.5 w-[137px] pl-2" />
      </div>
    </footer>
  );
}

export default function App() {
  return (
    <div className="flex h-screen flex-col overflow-hidden border-x border-[#8c9bb5] bg-[#f7f7f7] font-['Roboto','Liberation_Sans',sans-serif] text-[11px] leading-4 text-black">
      <Header />
      <Ribbon />
      <div className="flex min-h-0 flex-1">
        <div className="w-2 shrink-0 bg-[linear-gradient(#bcc4d0_33px,#8ea0d4_33px,#8ea0d4_52px,#6c93cf_52px,#6c93cf_68px,#5079cc_68px,#5079cc_115px,#3873c4_115px,#3873c4_182px,#5079cc_182px,#5079cc_258px,#6c93cf_258px,#6c93cf_290px,#6ab0d8_290px,#6ab0d8_296px,#8ea0d4_296px,#8ea0d4_335px,#bcc4d0_335px,#bcc4d0_435px,#dde6e6_438px)]" />
        <Sidebar />
        <div className="w-[7px] shrink-0 bg-[linear-gradient(#6c93cf_6px,#5079cc_6px,#5079cc_56px,#3873c4_56px,#3873c4_196px,#5079cc_196px,#5079cc_230px,#6c93cf_230px,#6c93cf_258px,#8ea0d4_258px,#8ea0d4_275px,#bcc4d0_275px,#bcc4d0_338px,#dde6e6_338px)]" />
        <DocumentView />
      </div>
      <BottomBars />
    </div>
  );
}
